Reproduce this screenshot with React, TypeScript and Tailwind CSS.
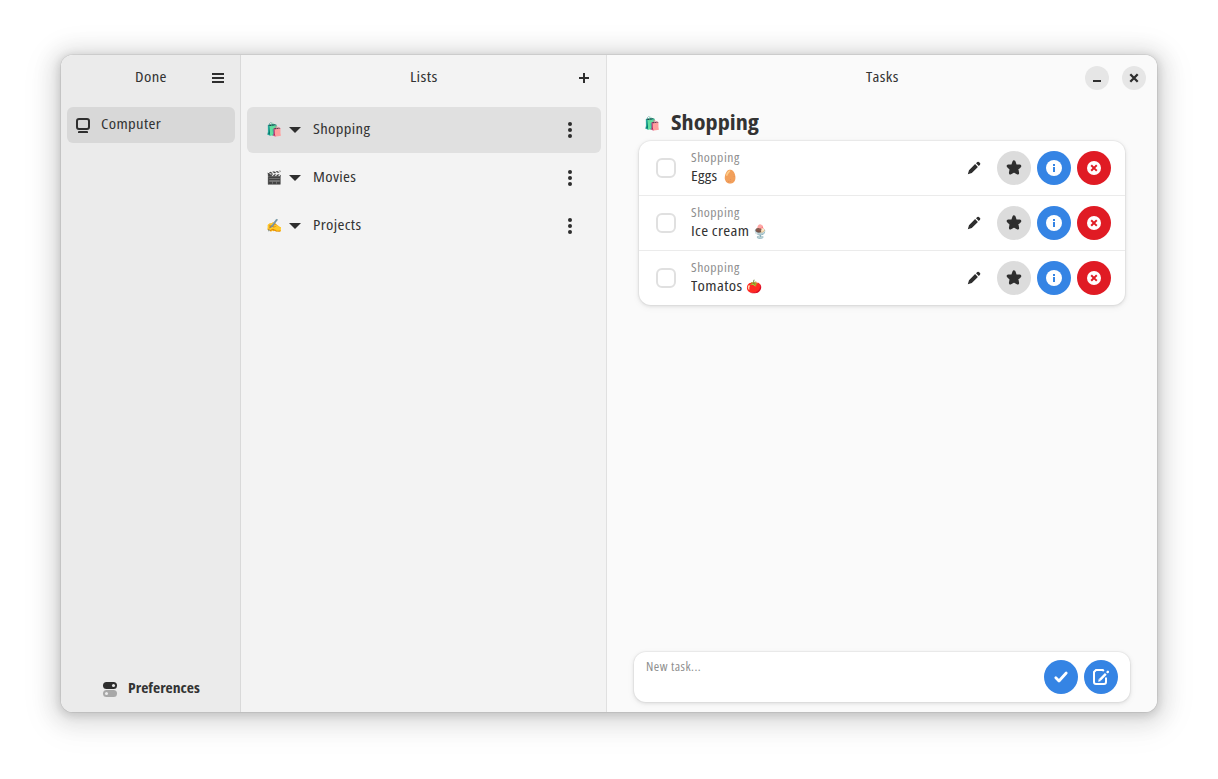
import React from 'react';

const svgBase = 'block shrink-0';

function Label({ children, className = '', stretch = 'origin-left scale-x-[1.14]' }: { children: React.ReactNode; className?: string; stretch?: string }) {
  return (
    <span className={`whitespace-nowrap ${className}`}>
      <span className={`inline-block align-top ${stretch}`}>{children}</span>
    </span>
  );
}

const Emoji = ({ children, className = '' }: { children: string; className?: string }) => (
  <span className={`inline-block font-['Noto_Color_Emoji',sans-serif] tracking-normal ${className}`}>{children}</span>
);

const MenuIcon = () => (
  <svg className={svgBase} width="16" height="16" viewBox="0 0 16 16" fill="#2e2e2e">
    <path d="M2 3h12v2H2zM2 7h12v2H2zM2 11h12v2H2z" />
  </svg>
);
const ComputerIcon = () => (
  <svg className={svgBase} width="16" height="16" viewBox="0 0 16 16" fill="none" stroke="#2e2e2e" strokeWidth="2">
    <rect x="2" y="2" width="12" height="10" rx="2" />
    <path d="M4 14h8a1 1 0 0 1 1 1v1H3v-1a1 1 0 0 1 1-1z" fill="#2e2e2e" stroke="none" />
  </svg>
);
const PlusIcon = () => (
  <svg className={svgBase} width="16" height="16" viewBox="0 0 16 16" fill="#2e2e2e">
    <path d="M7 3h2v4h4v2H9v4H7V9H3V7h4z" />
  </svg>
);
const CaretIcon = () => (
  <svg className={svgBase} width="16" height="16" viewBox="0 0 16 16" fill="#2e2e2e">
    <path d="M2 5h12L8 11z" />
  </svg>
);
const DotsIcon = () => (
  <svg className={svgBase} width="16" height="16" viewBox="0 0 16 16" fill="#2e2e2e">
    <circle cx="8" cy="2" r="2" />
    <circle cx="8" cy="8" r="2" />
    <circle cx="8" cy="14" r="2" />
  </svg>
);
const PencilIcon = () => (
  <svg className={svgBase} width="16" height="16" viewBox="0 0 16 16" fill="#2e2e2e">
    <path d="M9.1 4.1L11.9 6.9 5.8 13 1.8 14.2 3 10.2zM10 3.2L11.3 2a1.2 1.2 0 0 1 1.6 0l1.1 1.1a1.2 1.2 0 0 1 0 1.6L12.8 6z" />
  </svg>
);
const StarIcon = () => (
  <svg className={svgBase} width="16" height="16" viewBox="0 0 16 16" fill="#2e2e2e" stroke="#2e2e2e" strokeWidth="3" strokeLinejoin="round">
    <path d="M8 1.8L9.4 5.7 13.8 6.1 10.9 8.9 11.6 13 8 11 4.4 13 5.1 8.9 2.2 6.1 6.6 5.7z" />
  </svg>
);
const InfoIcon = () => (
  <svg className={svgBase} width="16" height="16" viewBox="0 0 16 16">
    <circle cx="8" cy="8" r="8" fill="#fff" />
    <path d="M7 4h2v2H7zM7 7h2v5H7z" fill="#3584e4" />
  </svg>
);
const DeleteIcon = () => (
  <svg className={svgBase} width="16" height="16" viewBox="0 0 16 16">
    <circle cx="8" cy="8" r="7" fill="#fff" />
    <path d="M5.9 5.9l4.2 4.2M10.1 5.9L5.9 10.1" stroke="#e01b24" strokeWidth="2" strokeLinecap="square" />
  </svg>
);
const CheckIcon = () => (
  <svg className={svgBase} width="16" height="16" viewBox="0 0 16 16" fill="none" stroke="#fff" strokeWidth="2.8" strokeLinecap="round" strokeLinejoin="round">
    <path d="M2.8 8.8L6 12 13.2 4" />
  </svg>
);
const ComposeIcon = () => (
  <svg className={svgBase} width="16" height="16" viewBox="0 0 16 16" fill="none" stroke="#fff" strokeWidth="2">
    <path d="M10.8 2L9.8 1H3L1 3V13a2 2 0 0 0 2 2h8a2 2 0 0 0 2-2V8.5" />
    <path d="M6.9 10.9L12.8 4.8" strokeWidth="2.4" />
    <path d="M5.8 9.8l2.2 2.2-2.8.8z" fill="#fff" stroke="none" />
    <path d="M14.6 3.1L14.9 2.8" strokeWidth="2.4" strokeLinecap="round" />
  </svg>
);
const PreferencesIcon = () => (
  <svg className={svgBase} width="16" height="16" viewBox="0 0 16 16">
    <rect x="1" y="1" width="14" height="7" rx="3.5" fill="#2e2e2e" />
    <circle cx="11.5" cy="4.5" r="1.5" fill="#ebebeb" />
    <rect x="1" y="9" width="14" height="7" rx="3.5" fill="#a8a8a8" />
    <circle cx="4.5" cy="12.5" r="1.5" fill="#ebebeb" />
  </svg>
);
const MinimizeIcon = () => (
  <svg className={svgBase} width="16" height="16" viewBox="0 0 16 16" fill="#2e2e2e">
    <path d="M4 10h8v2H4z" />
  </svg>
);
const CloseIcon = () => (
  <svg className={svgBase} width="16" height="16" viewBox="0 0 16 16" stroke="#2e2e2e" strokeWidth="2.3">
    <path d="M4.3 4.3l7.4 7.4M11.7 4.3l-7.4 7.4" />
  </svg>
);

function Round({ children, className }: { children: React.ReactNode; className: string }) {
  return <button className={`flex size-[34px] shrink-0 items-center justify-center rounded-full ${className}`}>{children}</button>;
}

function ListRow({ emoji, name, selected }: { emoji: string; name: string; selected?: boolean }) {
  return (
    <div className={`flex h-[46px] items-center rounded-md pl-[19px] pr-[23px] ${selected ? 'bg-[#e0e0e0]' : ''}`}>
      <Emoji className="w-[21px] pb-px text-[13px] leading-4">{emoji}</Emoji>
      <CaretIcon />
      <Label className="ml-[10px] flex-1 pb-1">{name}</Label>
      <DotsIcon />
    </div>
  );
}

function TaskRow({ name, emoji, gap }: { name: string; emoji: string; gap: string }) {
  return (
    <div className="box-content flex h-[54px] items-center pl-[17px] pr-[14px]">
      <div className="size-5 shrink-0 rounded-[6px] border-2 border-[#e0e0e0]" />
      <div className="ml-[15px] flex flex-1 flex-col pb-px">
        <Label className="text-[12px] leading-[18px] tracking-[0.45px] text-[#8e8e8e]">Shopping</Label>
        <div className="-mt-px flex items-start leading-[18px]">
          <Label>{name}</Label>
          <Emoji className={`pt-0.5 text-[13px] ${gap}`}>{emoji}</Emoji>
        </div>
      </div>
      <div className="flex gap-1.5">
        <Round className=""><PencilIcon /></Round>
        <Round className="bg-[#dcdcdc]"><StarIcon /></Round>
        <Round className="bg-[#3584e4]"><InfoIcon /></Round>
        <Round className="bg-[#e01b24]"><DeleteIcon /></Round>
      </div>
    </div>
  );
}

export default function App() {
  return (
    <div className="h-[779px] w-[1218px] overflow-hidden bg-white pl-[61px] pt-[55px] font-['Open_Sans','Noto_Sans',sans-serif] text-[14.67px] leading-5 tracking-[0.3px] text-[#333333] [font-stretch:75%]">
      <div className="flex h-[657px] w-[1096px] overflow-hidden rounded-xl shadow-[0_0_0_1px_rgba(0,0,0,0.06),0_2px_8px_2px_rgba(0,0,0,0.13),0_3px_20px_10px_rgba(0,0,0,0.09),0_6px_32px_16px_rgba(0,0,0,0.04)]">
        <aside className="flex w-[180px] flex-col border-r border-[#d9d9d9] bg-[#ebebeb]">
          <header className="grid h-[46px] grid-cols-[1fr_auto_1fr] items-center pl-[15px] pr-[14px]">
            <span />
            <Label className="pb-1" stretch="scale-x-[1.14]">Done</Label>
            <div className="flex justify-end"><MenuIcon /></div>
          </header>
          <nav className="flex-1 pl-1.5 pr-[5px] pt-1.5">
            <div className="flex h-9 items-center rounded-md bg-[#d8d8d8] pl-2">
              <ComputerIcon />
              <Label className="ml-[10px] pb-1">Computer</Label>
            </div>
          </nav>
          <button className="flex h-12 items-center justify-center gap-[10px] pr-1 pt-px">
            <PreferencesIcon />
            <Label className="pb-[3px] font-bold tracking-normal" stretch="origin-left scale-x-[1.07]">Preferences</Label>
          </button>
        </aside>
        <section className="flex w-[366px] flex-col border-r border-[#e0e0e0] bg-[#f3f3f3]">
          <header className="grid h-[46px] grid-cols-[1fr_auto_1fr] items-center pl-[15px] pr-[14px]">
            <span />
            <Label className="pb-1" stretch="scale-x-[1.18]">Lists</Label>
            <div className="flex justify-end"><PlusIcon /></div>
          </header>
          <div className="flex flex-col gap-0.5 pl-1.5 pr-[5px] pt-1.5">
            <ListRow emoji="🛍️" name="Shopping" selected />
            <ListRow emoji="🎬" name="Movies" />
            <ListRow emoji="✍️" name="Projects" />
          </div>
        </section>
        <main className="flex w-[550px] flex-col bg-[#fafafa]">
          <header className="grid h-[46px] grid-cols-[1fr_auto_1fr] items-center px-[11px]">
            <span />
            <Label className="pb-1" stretch="scale-x-[1.14]">Tasks</Label>
            <div className="flex justify-end gap-[13px]">
              <button className="flex size-6 items-center justify-center rounded-full bg-[#e6e6e6]"><MinimizeIcon /></button>
              <button className="flex size-6 items-center justify-center rounded-full bg-[#e6e6e6]"><CloseIcon /></button>
            </div>
          </header>
          <div className="flex-1 px-8">
            <h1 className="flex h-10 items-center pl-[5px]">
              <Emoji className="w-[27px] pt-1.5 text-[13px] leading-4">🛍️</Emoji>
              <Label className="pb-px text-[22px] font-bold leading-7 tracking-normal" stretch="origin-left scale-x-[1.1]">Shopping</Label>
            </h1>
            <div className="divide-y divide-[#ebebeb] rounded-xl bg-white shadow-[0_0_0_1px_rgba(0,0,0,0.03),0_1px_3px_1px_rgba(0,0,0,0.07),0_2px_6px_2px_rgba(0,0,0,0.03)]">
              <TaskRow name="Eggs" emoji="🥚" gap="ml-2" />
              <TaskRow name="Ice cream" emoji="🍨" gap="ml-[10px]" />
              <TaskRow name="Tomatos" emoji="🍅" gap="ml-[10px]" />
            </div>
          </div>
          <div className="mx-[27px] mb-[10px] flex h-[50px] items-start gap-1.5 rounded-xl bg-white pl-3 pr-3 pt-2 shadow-[0_0_0_1px_rgba(0,0,0,0.03),0_1px_3px_1px_rgba(0,0,0,0.07),0_2px_6px_2px_rgba(0,0,0,0.03)]">
            <Label className="-mt-0.5 flex-1 text-[12px] leading-[18px] tracking-[0.45px] text-[#8e8e8e]" stretch="origin-left scale-x-[1.09]">New task...</Label>
            <Round className="bg-[#3584e4]"><CheckIcon /></Round>
            <Round className="bg-[#3584e4]"><ComposeIcon /></Round>
          </div>
        </main>
      </div>
    </div>
  );
}
